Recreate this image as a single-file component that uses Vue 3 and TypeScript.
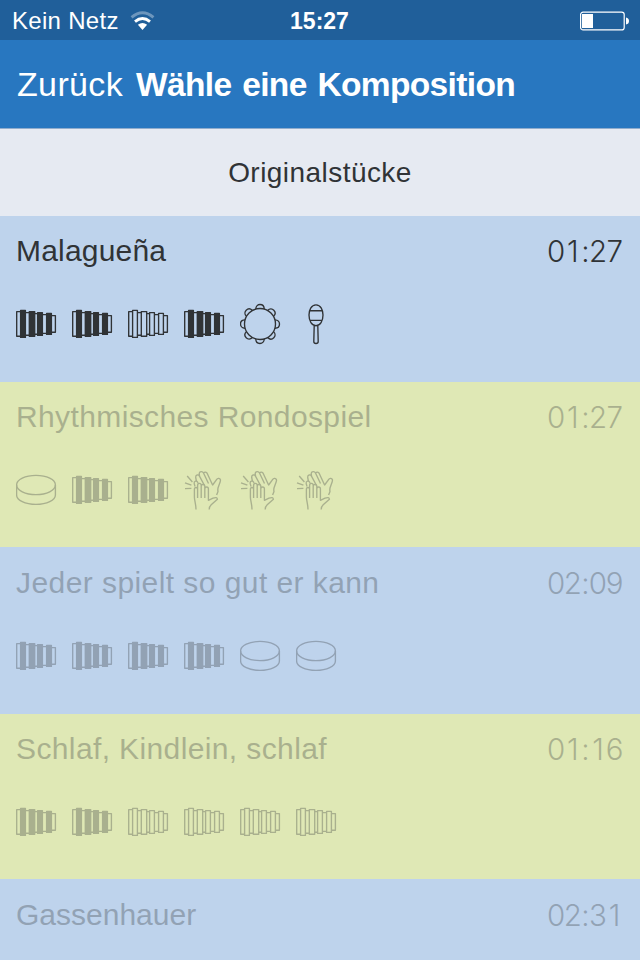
<script setup lang="ts">
type Icon = 'melodica' | 'outline' | 'tambourine' | 'maraca' | 'drum' | 'clap'

interface Piece {
  title: string
  time: string
  icons: Icon[]
  enabled: boolean
  spacing: number
}

const pieces: Piece[] = [
  { title: 'Malagueña', time: '01:27', enabled: true, spacing: 0.2, icons: ['melodica', 'melodica', 'outline', 'melodica', 'tambourine', 'maraca'] },
  { title: 'Rhythmisches Rondospiel', time: '01:27', enabled: false, spacing: 0.38, icons: ['drum', 'melodica', 'melodica', 'clap', 'clap', 'clap'] },
  { title: 'Jeder spielt so gut er kann', time: '02:09', enabled: false, spacing: 0.43, icons: ['melodica', 'melodica', 'melodica', 'melodica', 'drum', 'drum'] },
  { title: 'Schlaf, Kindlein, schlaf', time: '01:16', enabled: false, spacing: 0.38, icons: ['melodica', 'melodica', 'outline', 'outline', 'outline', 'outline'] },
  { title: 'Gassenhauer', time: '02:31', enabled: false, spacing: 0, icons: [] },
]

const lobes = [0, 45, 90, 135, 180, 225, 270, 315]
</script>

<template>
  <main class="screen">
    <header class="status">
      <div class="carrier">
        <span>Kein Netz</span>
        <svg class="wifi" width="25" height="20" viewBox="0 0 26 20">
          <path class="weak" d="M1.6 6.3Q13-3.3 24.4 6.3" />
          <path d="M5.2 10.6Q13 4.2 20.8 10.6" />
          <path class="dot" d="M8.2 14Q13 10 17.8 14L13 19.4Z" />
        </svg>
      </div>
      <span class="clock">15:27</span>
      <svg class="battery" width="50" height="20" viewBox="0 0 50 20">
        <rect x="1.6" y="1.1" width="43.6" height="17.8" rx="2.5" />
        <path class="fill" d="M3 3h11v14H3zM47 6.5q3 .5 3 3.5t-3 3.5z" />
      </svg>
    </header>
    <nav class="nav">
      <span class="back">Zurück</span>
      <h1>Wähle eine Komposition</h1>
    </nav>
    <h2 class="section">Originalstücke</h2>
    <ul class="list">
      <li v-for="piece in pieces" :key="piece.title" :class="['piece', { disabled: !piece.enabled }]">
        <div class="line">
          <span :style="{ letterSpacing: piece.spacing + 'px' }">{{ piece.title }}</span>
          <span class="time"><span v-for="(char, i) in piece.time" :key="i" :class="char === ':' ? 'colon' : 'digit'">{{ char }}</span></span>
        </div>
        <div class="icons">
          <svg v-for="(icon, i) in piece.icons" :key="i" class="icon" width="42" height="42" viewBox="0 0 42 42">
            <g v-if="icon === 'melodica' || icon === 'outline'" :class="{ solid: icon === 'melodica' }">
              <path d="M4.6 8.6H.7V33.2H4.6M9.4 9.6H13.3M9.4 32.2H13.3M18.7 10.6H21.6M18.7 31.2H21.6M26.4 11.6H30.6M26.4 30.4H30.6M35.4 12.6H39.4V29.2H35.4" />
              <rect class="rib" x="4.6" y="7.4" width="4.8" height="27" />
              <rect class="rib" x="13.3" y="8.6" width="5.4" height="24.6" />
              <rect class="rib" x="21.6" y="9.6" width="4.8" height="22.8" />
              <rect class="rib" x="30.6" y="10.4" width="4.8" height="21" />
            </g>
            <g v-else-if="icon === 'tambourine'">
              <circle cx="20" cy="21" r="15.5" />
              <path v-for="angle in lobes" :key="angle" :transform="`rotate(${angle} 20 21)`" d="M15.8 6C15.8 0 24.2 0 24.2 6" />
            </g>
            <g v-else-if="icon === 'maraca'">
              <path d="M20 1.9C15.2 1.9 13 7 13 12C13 18.3 15.8 22.7 20 22.7S27 18.3 27 12C27 7 24.8 1.9 20 1.9ZM13.6 7.7H26.4M14.4 17.3H25.6M18.2 22.7L17.8 38.6Q17.8 40.5 20 40.5T22.2 38.6L21.8 22.7" />
            </g>
            <g v-else-if="icon === 'drum'">
              <ellipse cx="20" cy="16" rx="19.4" ry="9.6" />
              <path d="M.6 16V26C.6 31.2 9.2 35.4 20 35.4S39.4 31.2 39.4 26V16" />
            </g>
            <g v-else>
              <path d="M12 40.5C12 35 10.4 32 10.4 28V20.5Q10.4 18.5 12 18.5T13.6 20.5V29M13.6 28V16.5Q13.6 14.4 15.4 14.4T17.2 16.5V29M17.2 28V17.5Q17.2 15.3 19 15.3T20.8 17.5V29M20.8 28V20Q20.8 18 22.6 18T24.4 20V31.3L29 29.2Q33.2 27.6 33.4 30.2L27.2 35.8Q25.3 37.6 25.2 40.5" />
              <path d="M11 17.5L10.2 14.6Q9.8 12.6 11.4 12.1T13.8 13.5L14.4 14.5M12.4 12L11.7 8.5Q11.4 6.5 13.1 6T15.6 7.4L20.5 16.5M15.6 7.4L15.2 4.8Q15.2 2.8 17 2.6T19.5 4L24.5 14.5M19.6 4.2Q21.2 2.2 23 4L28.6 16L32.4 10.8Q34.4 8.4 36.2 10.2Q36.8 11 36.2 12.8L34 19Q33.6 21 34 22.6L32.6 26M8.4 13L3.2 7M7.4 16.2L1 13.8M7.4 19.4L1 19.6" />
            </g>
          </svg>
        </div>
      </li>
    </ul>
  </main>
</template>

<style>
body {
  margin: 0;
}
</style>

<style scoped>
.screen {
  width: 640px;
  height: 960px;
  overflow: hidden;
  background: #bed3ec;
  color: #303336;
  font-family: "Liberation Sans", Arial, sans-serif;
}
.status {
  display: grid;
  grid-template-columns: 1fr auto 1fr;
  align-items: center;
  height: 40px;
  padding: 0 11px 0 12px;
  box-sizing: border-box;
  background: #205f9a;
  color: #fff;
  font-size: 24px;
  line-height: 42px;
}
.carrier {
  display: flex;
  align-items: center;
  gap: 11px;
  letter-spacing: 0.3px;
}
.clock {
  margin-right: 2px;
  font-weight: bold;
  font-size: 23px;
}
.wifi {
  fill: none;
  stroke: #fff;
  stroke-width: 3;
}
.wifi .weak {
  opacity: 0.35;
}
.wifi .dot {
  fill: #fff;
  stroke: none;
}
.battery {
  justify-self: end;
  fill: none;
  stroke: #fff;
  stroke-width: 1.2;
}
.battery .fill {
  fill: #fff;
  stroke: none;
}
.nav {
  display: flex;
  align-items: baseline;
  gap: 13px;
  height: 89px;
  padding: 0 17px;
  box-sizing: border-box;
  background: #2877c0;
  border-bottom: 1px solid #91adcd;
  color: #fff;
  font-size: 34px;
  line-height: 88px;
}
.back {
  letter-spacing: 0.35px;
}
.nav h1 {
  margin: 0;
  font-size: 33.5px;
  letter-spacing: -0.63px;
  word-spacing: 2px;
}
.section {
  height: 87px;
  margin: 0;
  background: #e6eaf2;
  font-size: 28px;
  font-weight: normal;
  letter-spacing: 0.45px;
  line-height: 87px;
  text-align: center;
}
.list {
  margin: 0;
  padding: 0;
  list-style: none;
}
.piece {
  display: flex;
  flex-direction: column;
  gap: 34px;
  height: 166px;
  padding: 17px 17px 0 16px;
  box-sizing: border-box;
  background: #bed3ec;
}
.piece:nth-child(even) {
  background: #dfe8b5;
  border-bottom: 1px solid #bed3ec;
}
.line {
  display: flex;
  justify-content: space-between;
  font-size: 30px;
  line-height: 36px;
}
.time {
  display: flex;
  font-family: Inter, "Liberation Sans", sans-serif;
  font-size: 29.5px;
  font-weight: 300;
}
.digit,
.colon {
  display: flex;
  justify-content: center;
  width: 16.7px;
}
.colon {
  width: 8.4px;
}
.disabled .line,
.disabled .icons {
  opacity: 0.3;
}
.icons {
  display: flex;
  gap: 14px;
}
.icon {
  fill: none;
  stroke: currentColor;
  stroke-width: 1.35;
  stroke-linejoin: round;
}
.solid .rib {
  fill: currentColor;
}
</style>
